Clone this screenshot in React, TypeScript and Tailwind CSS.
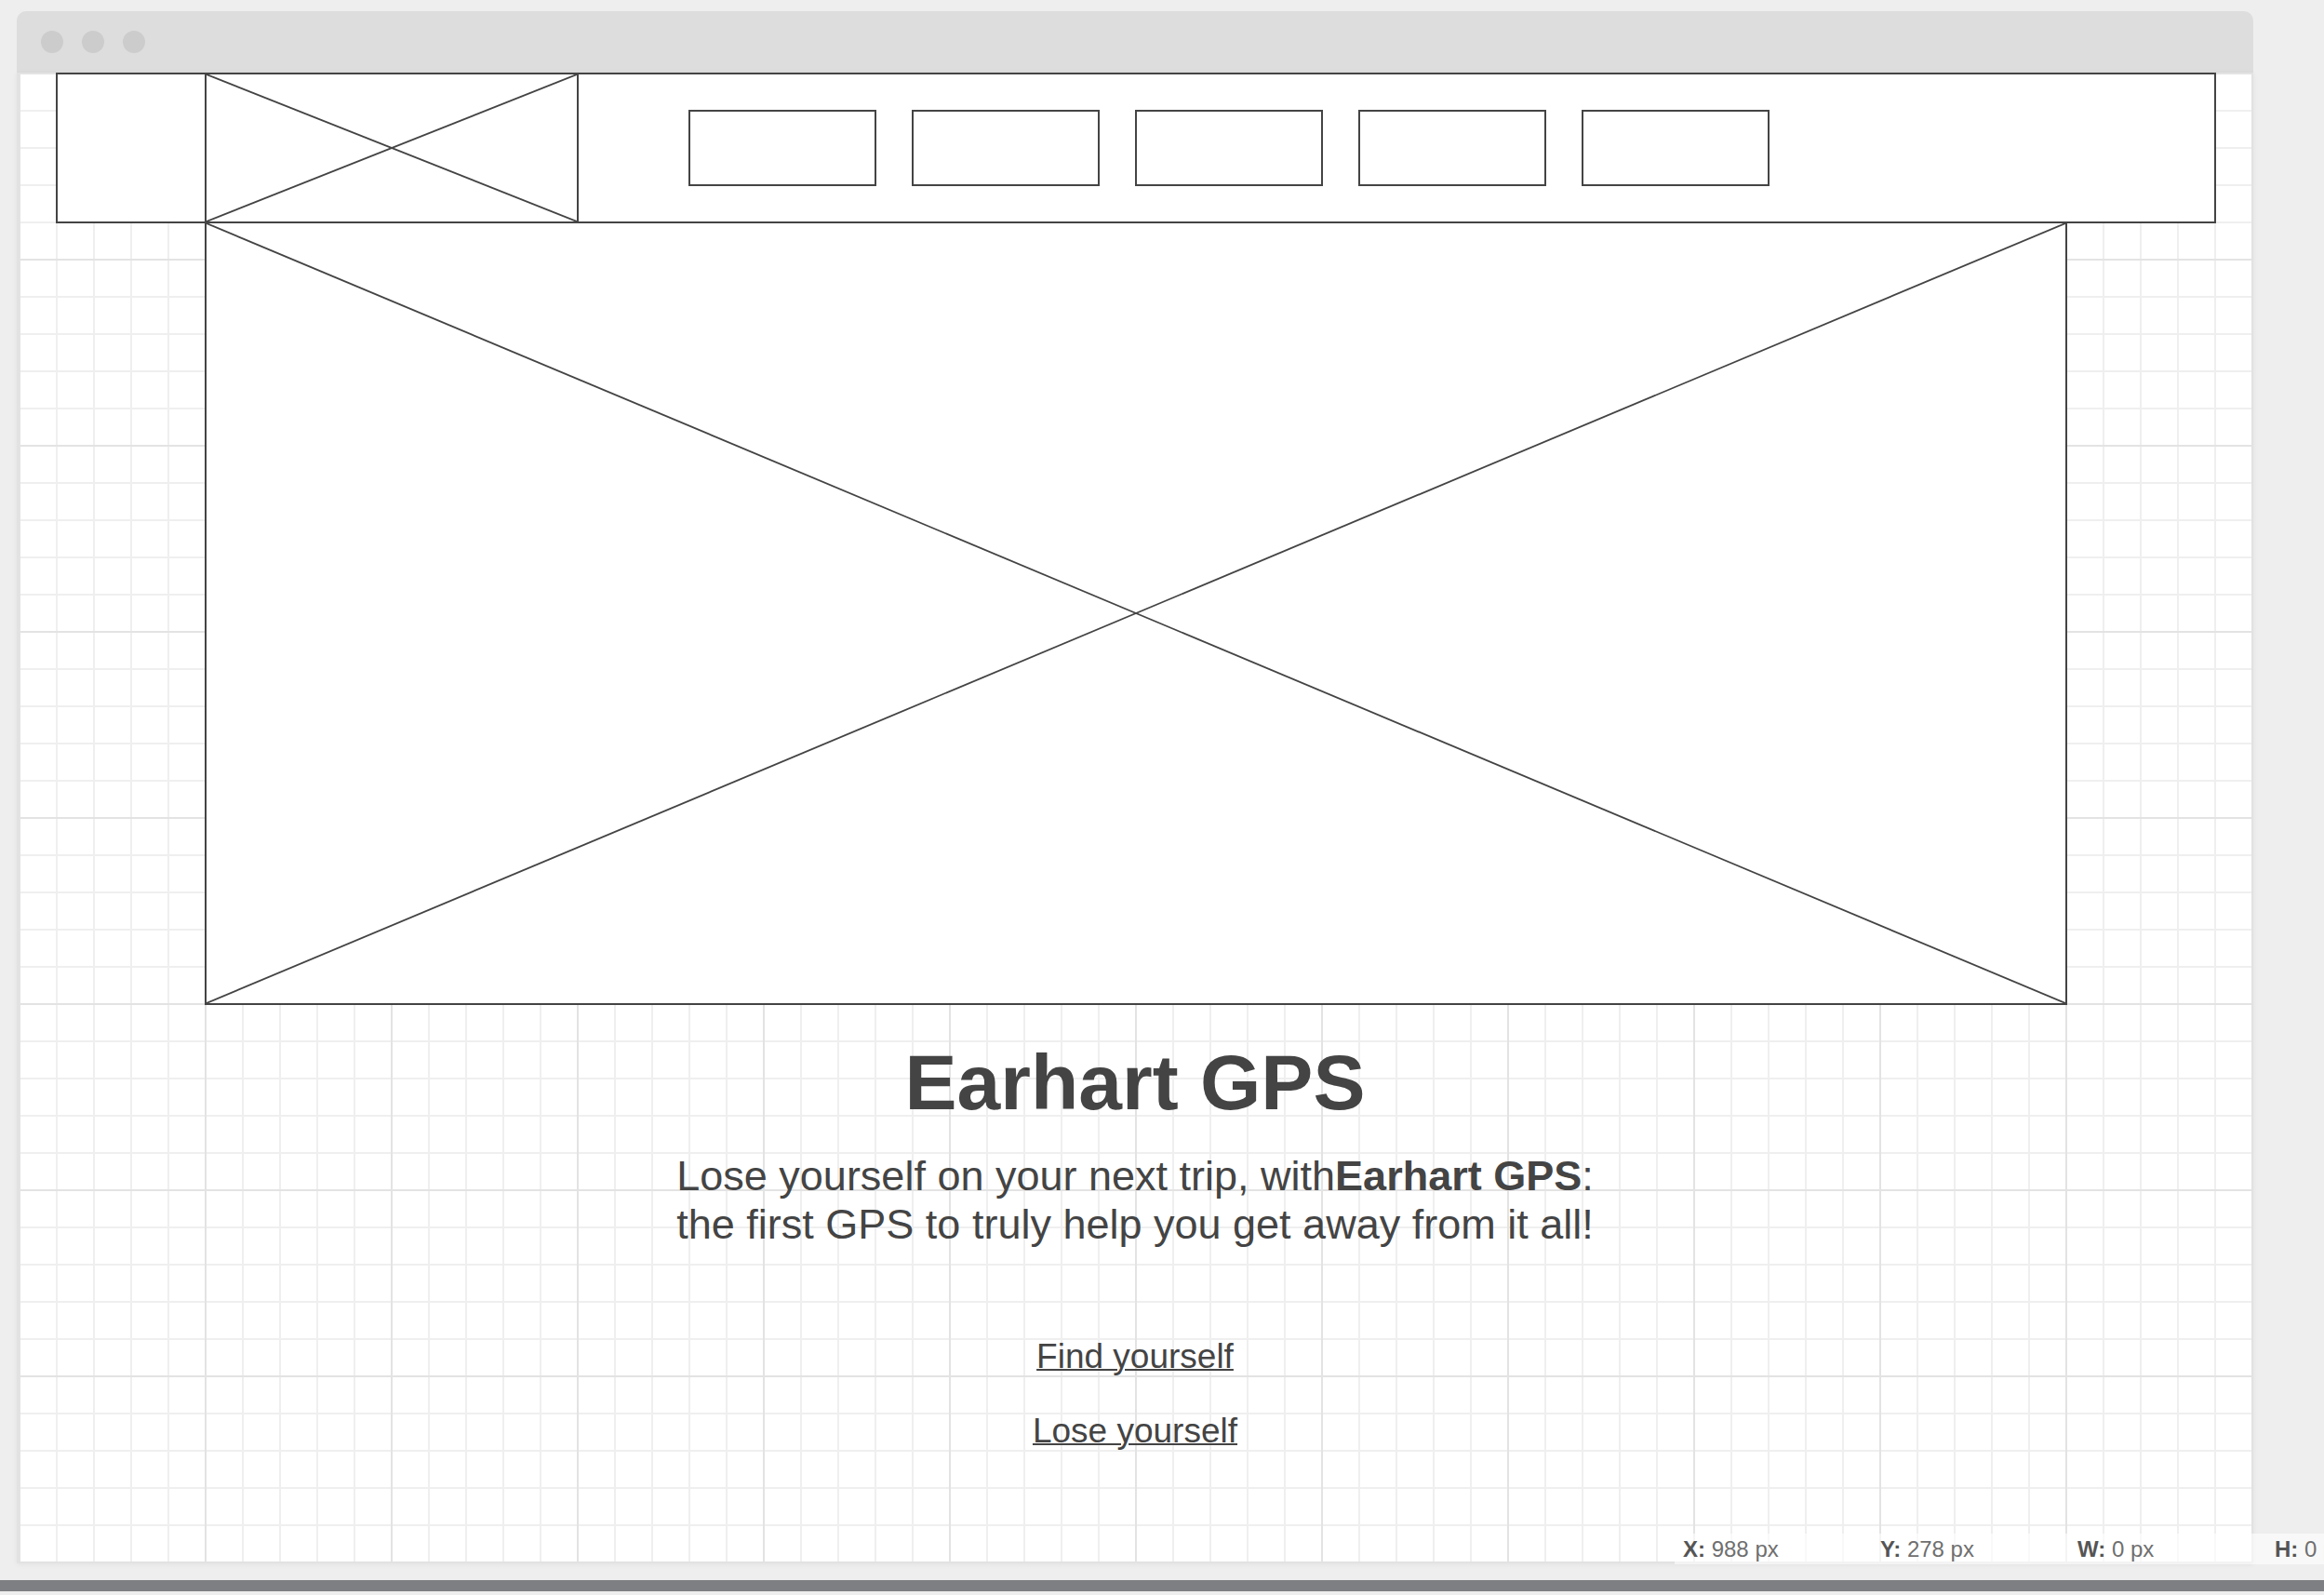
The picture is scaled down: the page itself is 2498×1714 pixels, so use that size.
import React from 'react';

const Cross: React.FC = () => (
  <svg className="block h-full w-full" viewBox="0 0 100 100" preserveAspectRatio="none">
    <line x1="0" y1="0" x2="100" y2="100" stroke="#444444" strokeWidth="1.8" vectorEffect="non-scaling-stroke" />
    <line x1="100" y1="0" x2="0" y2="100" stroke="#444444" strokeWidth="1.8" vectorEffect="non-scaling-stroke" />
  </svg>
);

const stats = [
  { label: 'X:', value: '988 px' },
  { label: 'Y:', value: '278 px' },
  { label: 'W:', value: '0 px' },
  { label: 'H:', value: '0 px' },
];

const App: React.FC = () => {
  return (
    <div className="relative h-[1714px] w-full overflow-hidden bg-[#eeeeee] font-['Liberation_Sans',Arial,sans-serif]">
      {/* browser window */}
      <div className="ml-[18px] w-[2404px] pt-[12px]">
        <div className="flex h-[66px] items-center gap-5 rounded-t-[10px] bg-[#dddddd] pl-[26px]">
          <span className="h-6 w-6 rounded-full bg-[#cccccc]" />
          <span className="h-6 w-6 rounded-full bg-[#cccccc]" />
          <span className="h-6 w-6 rounded-full bg-[#cccccc]" />
        </div>

        <div className="h-[1602px] border-x-2 border-b-2 border-[#e2e2e2] bg-white shadow-[0_1px_6px_rgba(0,0,0,0.06)] [background-image:linear-gradient(to_right,#e3e3e3_2px,transparent_2px),linear-gradient(to_bottom,#e3e3e3_2px,transparent_2px),linear-gradient(to_right,#efefef_2px,transparent_2px),linear-gradient(to_bottom,#efefef_2px,transparent_2px)] [background-size:200px_200px,200px_200px,40px_40px,40px_40px]">
          {/* header */}
          <div className="ml-[40px] flex h-[162px] w-[2322px] items-center border-2 border-[#444444] bg-white">
            <div className="w-[158px] shrink-0" />
            <div className="h-full w-[402px] shrink-0 border-x-2 border-[#444444]">
              <Cross />
            </div>
            <nav className="ml-[118px] flex gap-[38px]">
              {[1, 2, 3, 4, 5].map((n) => (
                <div key={n} className="h-[82px] w-[202px] border-2 border-[#444444] bg-white" />
              ))}
            </nav>
          </div>

          {/* hero */}
          <div className="ml-[200px] h-[840px] w-[2002px] border-x-2 border-b-2 border-[#444444] bg-white">
            <Cross />
          </div>

          <div className="mt-[41px] flex flex-col items-center text-center text-[#444444]">
            <h1 className="text-[84px] font-bold leading-[84px]">Earhart GPS</h1>
            <p className="mt-[33px] text-[45px] leading-[52px]">
              Lose yourself on your next trip, with<strong className="font-bold">Earhart GPS</strong>:
              <br />
              the first GPS to truly help you get away from it all!
            </p>
            <a href="#" className="mt-[94px] text-[37px] leading-[44px] underline decoration-2 underline-offset-[1px]">
              Find yourself
            </a>
            <a href="#" className="mt-[36px] text-[37px] leading-[44px] underline decoration-2 underline-offset-[1px]">
              Lose yourself
            </a>
          </div>
        </div>
      </div>

      <div className="mt-[18px] h-[12px] w-full bg-[#7d7f83]" />

      {/* position readout */}
      <div className="absolute left-[1800px] right-0 top-[1648px] flex h-[33px] items-center overflow-hidden bg-white/60 pl-[9px] text-[24px] leading-[33px]">
        {stats.map((s) => (
          <div key={s.label} className="w-[212px] shrink-0 whitespace-nowrap">
            <span className="font-bold text-[#555555]">{s.label}</span>{' '}
            <span className="text-[#6f6f6f]">{s.value}</span>
          </div>
        ))}
      </div>
    </div>
  );
};

export default App;
